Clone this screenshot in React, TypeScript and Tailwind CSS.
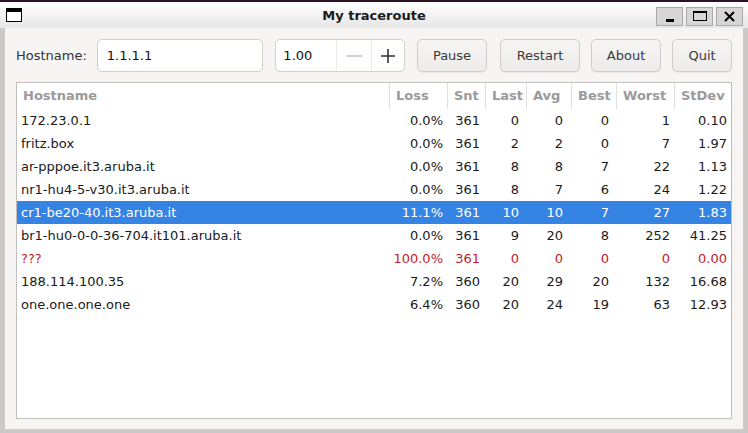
import React from 'react';

const rows = [
  { host: '172.23.0.1', loss: '0.0%', snt: 361, last: 0, avg: 0, best: 0, worst: 1, sd: '0.10' },
  { host: 'fritz.box', loss: '0.0%', snt: 361, last: 2, avg: 2, best: 0, worst: 7, sd: '1.97' },
  { host: 'ar-pppoe.it3.aruba.it', loss: '0.0%', snt: 361, last: 8, avg: 8, best: 7, worst: 22, sd: '1.13' },
  { host: 'nr1-hu4-5-v30.it3.aruba.it', loss: '0.0%', snt: 361, last: 8, avg: 7, best: 6, worst: 24, sd: '1.22' },
  { host: 'cr1-be20-40.it3.aruba.it', loss: '11.1%', snt: 361, last: 10, avg: 10, best: 7, worst: 27, sd: '1.83', selected: true },
  { host: 'br1-hu0-0-0-36-704.it101.aruba.it', loss: '0.0%', snt: 361, last: 9, avg: 20, best: 8, worst: 252, sd: '41.25' },
  { host: '???', loss: '100.0%', snt: 361, last: 0, avg: 0, best: 0, worst: 0, sd: '0.00', lost: true },
  { host: '188.114.100.35', loss: '7.2%', snt: 360, last: 20, avg: 29, best: 20, worst: 132, sd: '16.68' },
  { host: 'one.one.one.one', loss: '6.4%', snt: 360, last: 20, avg: 24, best: 19, worst: 63, sd: '12.93' },
];

const headers = ['Hostname', 'Loss', 'Snt', 'Last', 'Avg', 'Best', 'Worst', 'StDev'];
const cols = 'grid grid-cols-[373px_58px_38px_41px_45px_45px_58px_1fr]';

function WinButton({ children }: { children: React.ReactNode }) {
  return (
    <div className="w-[27px] h-[19px] bg-[#d6d6d6] border border-[#a9a9a9] flex items-center justify-center">
      {children}
    </div>
  );
}

function Button({ label, w }: { label: string; w: string }) {
  return (
    <div className={`${w} h-[33px] rounded-[5px] border border-[#cfcbc7] bg-gradient-to-b from-[#f7f6f5] to-[#edebe9] flex items-center justify-center text-[#3a3a3a] shadow-[0_1px_0_rgba(0,0,0,0.05)]`}>
      {label}
    </div>
  );
}

export default function App() {
  return (
    <div className="w-[748px] h-[433px] bg-[#cacaca] overflow-hidden flex flex-col text-[13px] font-['DejaVu_Sans',sans-serif]">
      <div className="h-[2px] bg-[#2c1426]" />

      {/* Title bar */}
      <div className="h-[26px] bg-gradient-to-b from-white to-[#e6e6e6] grid grid-cols-[1fr_auto_1fr] items-center">
        <div className="pl-[6px] flex">
          <div className="w-[16px] h-[14px] border border-black border-t-[4px] bg-white" />
        </div>
        <div className="font-bold text-[13px] text-[#1a1a1a] pt-[1px]">My traceroute</div>
        <div className="flex justify-end gap-[3px] pr-[5px] pt-[2px]">
          <WinButton>
            <div className="w-[8px] h-[3px] bg-black mt-[8px]" />
          </WinButton>
          <WinButton>
            <div className="w-[14px] h-[10px] border border-black border-t-2" />
          </WinButton>
          <WinButton>
            <svg width="11" height="11" viewBox="0 0 11 11">
              <path d="M1 1L10 10M10 1L1 10" stroke="black" strokeWidth="2" />
            </svg>
          </WinButton>
        </div>
      </div>

      {/* Window body */}
      <div className="mx-[5px] h-[401px] bg-[#f6f5f4] px-[11px] pt-[11px] flex flex-col">
        <div className="flex items-center h-[33px]">
          <div className="w-[81px] text-[#2e3436]">Hostname:</div>
          <div className="w-[167px] h-[33px] rounded-[5px] border border-[#d3d0cc] bg-white flex items-center pl-[9px] text-[#111]">
            1.1.1.1
          </div>
          <div className="ml-[12px] w-[130px] h-[33px] rounded-[5px] border border-[#d3d0cc] bg-white flex text-[#111]">
            <div className="w-[60px] flex items-center pl-[7px]">1.00</div>
            <div className="w-[35px] border-l border-[#ebebeb] flex items-center justify-center">
              <div className="w-[15px] h-[2px] bg-[#d0d0d0]" />
            </div>
            <div className="flex-1 border-l border-[#ebebeb] flex items-center justify-center">
              <svg width="16" height="16" viewBox="0 0 16 16">
                <path d="M8 1V15M1 8H15" stroke="#2e3436" strokeWidth="1.6" />
              </svg>
            </div>
          </div>
          <div className="ml-[12px]"><Button label="Pause" w="w-[70px]" /></div>
          <div className="ml-[13px]"><Button label="Restart" w="w-[80px]" /></div>
          <div className="ml-[11px]"><Button label="About" w="w-[70px]" /></div>
          <div className="ml-[11px]"><Button label="Quit" w="w-[60px]" /></div>
        </div>

        {/* Table */}
        <div className="mt-[10px] h-[337px] border border-[#c3c0bc] bg-white flex flex-col">
          <div className={`${cols} h-[26px] font-bold text-[#9a9a9a]`}>
            {headers.map((h, i) => (
              <div
                key={h}
                className={`flex items-center pl-[6px] ${i < headers.length - 1 ? 'border-r border-[#e0e0e0]' : ''}`}
              >
                {h}
              </div>
            ))}
          </div>
          {rows.map(r => {
            const color = r.selected ? 'bg-[#3584e4] text-white' : r.lost ? 'text-[#c01c28]' : 'text-[#1a1a1a]';
            return (
              <div key={r.host + r.loss} className={`${cols} h-[23px] items-center ${color}`}>
                <div className="pl-[4px]">{r.host}</div>
                <div className="text-right pr-[5px]">{r.loss}</div>
                <div className="text-right pr-[6px]">{r.snt}</div>
                <div className="text-right pr-[8px]">{r.last}</div>
                <div className="text-right pr-[9px]">{r.avg}</div>
                <div className="text-right pr-[8px]">{r.best}</div>
                <div className="text-right pr-[5px]">{r.worst}</div>
                <div className="text-right pr-[4px]">{r.sd}</div>
              </div>
            );
          })}
        </div>
      </div>
    </div>
  );
}
